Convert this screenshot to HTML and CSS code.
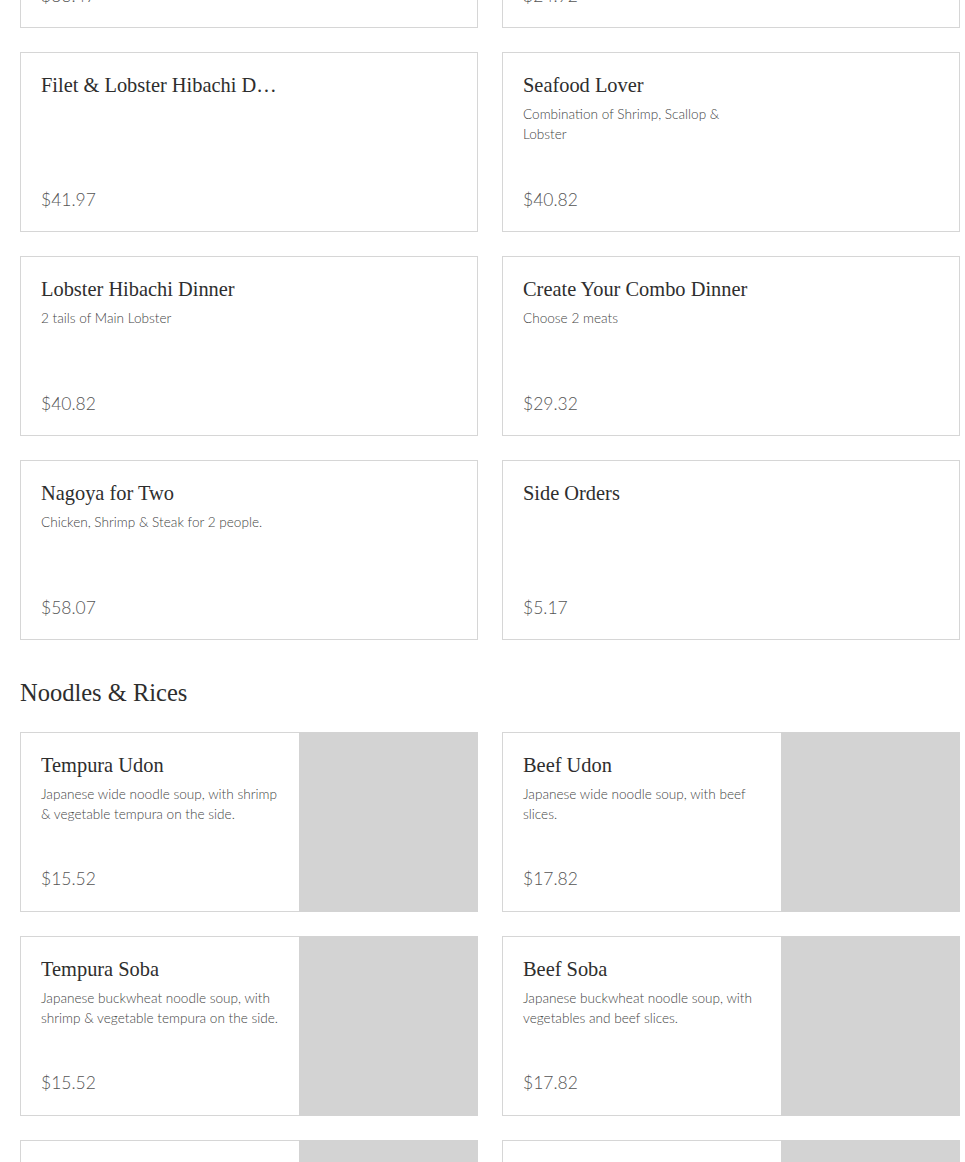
FILE: index.html
```html
<!DOCTYPE html>
<html lang="en">
<head>
    <meta charset="UTF-8">
    <meta name="viewport" content="width=device-width, initial-scale=1.0">
    <title>Menu</title>
    <link rel="stylesheet" href="styles.css">
</head>
<body>
    <div class="menu">
        <div class="grid first">
            <div class="item">
                <div class="info">
                    <h3>Steak &amp; Lobster Hibachi</h3>
                    <p class="price">$36.47</p>
                </div>
            </div>
            <div class="item">
                <div class="info">
                    <h3>Chicken &amp; Shrimp</h3>
                    <p class="price">$24.92</p>
                </div>
            </div>
            <div class="item">
                <div class="info">
                    <h3>Filet &amp; Lobster Hibachi Dinner</h3>
                    <p class="price">$41.97</p>
                </div>
            </div>
            <div class="item">
                <div class="info">
                    <h3>Seafood Lover</h3>
                    <p class="desc">Combination of Shrimp, Scallop &amp; Lobster</p>
                    <p class="price">$40.82</p>
                </div>
            </div>
            <div class="item">
                <div class="info">
                    <h3>Lobster Hibachi Dinner</h3>
                    <p class="desc">2 tails of Main Lobster</p>
                    <p class="price">$40.82</p>
                </div>
            </div>
            <div class="item">
                <div class="info">
                    <h3>Create Your Combo Dinner</h3>
                    <p class="desc">Choose 2 meats</p>
                    <p class="price">$29.32</p>
                </div>
            </div>
            <div class="item">
                <div class="info">
                    <h3>Nagoya for Two</h3>
                    <p class="desc">Chicken, Shrimp &amp; Steak for 2 people.</p>
                    <p class="price">$58.07</p>
                </div>
            </div>
            <div class="item">
                <div class="info">
                    <h3>Side Orders</h3>
                    <p class="price">$5.17</p>
                </div>
            </div>
        </div>

        <h2 class="section-title">Noodles &amp; Rices</h2>
        <div class="grid">
            <div class="item with-photo">
                <div class="info">
                    <h3>Tempura Udon</h3>
                    <p class="desc">Japanese wide noodle soup, with shrimp &amp; vegetable tempura on the side.</p>
                    <p class="price">$15.52</p>
                </div>
                <div class="photo"></div>
            </div>
            <div class="item with-photo">
                <div class="info">
                    <h3>Beef Udon</h3>
                    <p class="desc">Japanese wide noodle soup, with beef slices.</p>
                    <p class="price">$17.82</p>
                </div>
                <div class="photo"></div>
            </div>
            <div class="item with-photo">
                <div class="info">
                    <h3>Tempura Soba</h3>
                    <p class="desc">Japanese buckwheat noodle soup, with shrimp &amp; vegetable tempura on the side.</p>
                    <p class="price">$15.52</p>
                </div>
                <div class="photo"></div>
            </div>
            <div class="item with-photo">
                <div class="info">
                    <h3>Beef Soba</h3>
                    <p class="desc">Japanese buckwheat noodle soup, with vegetables and beef slices.</p>
                    <p class="price">$17.82</p>
                </div>
                <div class="photo"></div>
            </div>
            <div class="item with-photo">
                <div class="info">
                    <h3>Chicken Fried Rice</h3>
                    <p class="desc">Hibachi fried rice with chicken and egg.</p>
                    <p class="price">$12.07</p>
                </div>
                <div class="photo"></div>
            </div>
            <div class="item with-photo">
                <div class="info">
                    <h3>Yaki Udon</h3>
                    <p class="desc">Stir fried udon noodles with vegetables.</p>
                    <p class="price">$14.37</p>
                </div>
                <div class="photo"></div>
            </div>
        </div>
    </div>
</body>
</html>
```

FILE: styles.css
```css
* {
    margin: 0;
    padding: 0;
    box-sizing: border-box;
}

body {
    background: #FFFFFF;
    color: #333333;
    font-family: Lato, "Liberation Sans", sans-serif;
    overflow: hidden;
}

.menu {
    width: 940px;
    margin-left: 20px;
}

.grid {
    display: grid;
    grid-template-columns: 1fr 1fr;
    gap: 24px;
}

.grid.first {
    margin-top: -152px;
}

.item {
    display: flex;
    height: 180px;
    border: 1px solid #D6D6D6;
    background: #FFFFFF;
}

.item.with-photo {
    border: none;
}

.item.with-photo .info {
    border: 1px solid #D6D6D6;
    border-right: none;
}

.info {
    display: flex;
    flex-direction: column;
    width: 279px;
    padding: 20px;
}

.item:not(.with-photo) .info {
    width: 278px;
    padding: 20px 19px 19px 20px;
}

.info h3 {
    font-family: "Liberation Serif", "DejaVu Serif", serif;
    font-weight: normal;
    font-size: 20.4px;
    line-height: 24px;
    color: #2E2E2E;
    white-space: nowrap;
    overflow: hidden;
    text-overflow: ellipsis;
}

.desc {
    margin-top: 7px;
    font-size: 13.6px;
    font-weight: 300;
    line-height: 20px;
    color: #444444;
}

.price {
    margin-top: auto;
    font-size: 17.5px;
    font-weight: 300;
    line-height: 24px;
    color: #555555;
}

.photo {
    width: 179px;
    flex-shrink: 0;
    background: #D3D3D3;
}

.section-title {
    margin: 38px 0 24px;
    font-family: "Liberation Serif", "DejaVu Serif", serif;
    font-weight: normal;
    font-size: 24.5px;
    line-height: 30px;
    color: #2E2E2E;
}
```
